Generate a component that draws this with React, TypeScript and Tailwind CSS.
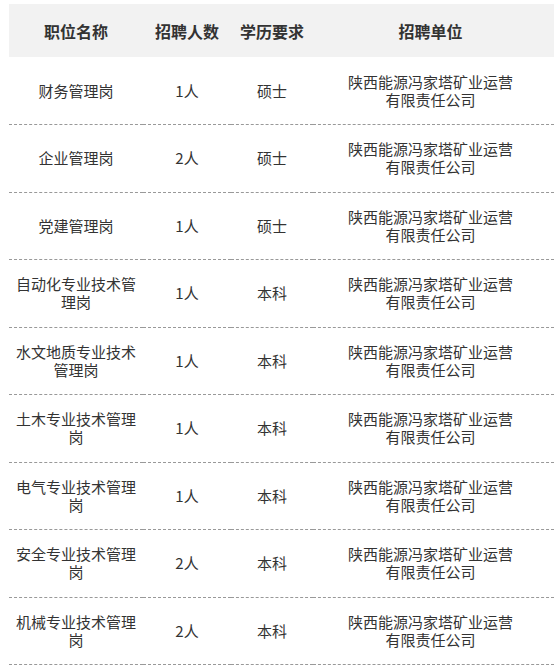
const rows = [
  { name: "财务管理岗", num: "1人", edu: "硕士" },
  { name: "企业管理岗", num: "2人", edu: "硕士" },
  { name: "党建管理岗", num: "1人", edu: "硕士" },
  { name: "自动化专业技术管理岗", num: "1人", edu: "本科" },
  { name: "水文地质专业技术管理岗", num: "1人", edu: "本科" },
  { name: "土木专业技术管理岗", num: "1人", edu: "本科" },
  { name: "电气专业技术管理岗", num: "1人", edu: "本科" },
  { name: "安全专业技术管理岗", num: "2人", edu: "本科" },
  { name: "机械专业技术管理岗", num: "2人", edu: "本科" },
];

const unit = "陕西能源冯家塔矿业运营有限责任公司";

function App() {
  return (
    <div className="h-[669px] overflow-hidden bg-white pt-[4px] pl-[9px] font-['Noto_Sans_CJK_SC',sans-serif] text-[#333]">
      <table className="w-[545px] table-fixed border-collapse text-center">
        <colgroup>
          <col className="w-[134px]" />
          <col className="w-[88px]" />
          <col className="w-[82px]" />
          <col className="w-[241px]" />
        </colgroup>
        <thead>
          <tr className="h-[53px] bg-[#f2f2f2] text-[16px] font-bold leading-[20px]">
            <th className="px-[5px]">职位名称</th>
            <th className="px-[5px]">招聘人数</th>
            <th className="px-[5px]">学历要求</th>
            <th className="pl-[5px] pr-[11px]">招聘单位</th>
          </tr>
        </thead>
        <tbody className="text-[15px] leading-[18px]">
          {rows.map((r) => (
            <tr key={r.name} className="h-[67.5px] border-b border-dashed border-[#999]">
              <td className="px-[7px]">{r.name}</td>
              <td className="px-[5px]">{r.num}</td>
              <td className="px-[5px]">{r.edu}</td>
              <td className="pl-[30px] pr-[36px]">{unit}</td>
            </tr>
          ))}
        </tbody>
      </table>
    </div>
  );
}

export default App;
